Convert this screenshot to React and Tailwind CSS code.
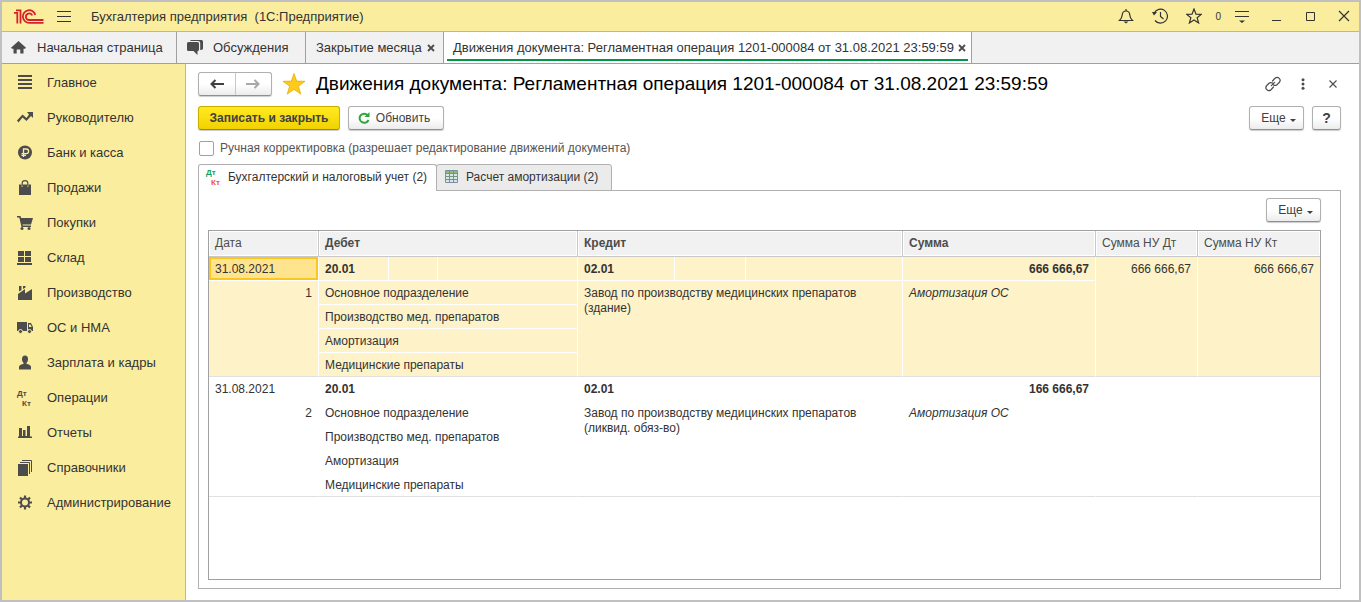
const SECTIONS = [
  { icon: 'main', label: 'Главное' },
  { icon: 'trend', label: 'Руководителю' },
  { icon: 'ruble', label: 'Банк и касса' },
  { icon: 'bag', label: 'Продажи' },
  { icon: 'cart', label: 'Покупки' },
  { icon: 'boxes', label: 'Склад' },
  { icon: 'factory', label: 'Производство' },
  { icon: 'truck', label: 'ОС и НМА' },
  { icon: 'person', label: 'Зарплата и кадры' },
  { icon: 'dtkt', label: 'Операции' },
  { icon: 'chart', label: 'Отчеты' },
  { icon: 'books', label: 'Справочники' },
  { icon: 'gear', label: 'Администрирование' },
]

const ENTRIES = [
  {
    date: '31.08.2021',
    number: 1,
    debit: '20.01',
    credit: '02.01',
    amount: '666 666,67',
    taxDebit: '666 666,67',
    taxCredit: '666 666,67',
    debitLines: ['Основное подразделение', 'Производство мед. препаратов', 'Амортизация', 'Медицинские препараты'],
    creditLine: 'Завод по производству медицинских препаратов (здание)',
    comment: 'Амортизация ОС',
    selected: true,
  },
  {
    date: '31.08.2021',
    number: 2,
    debit: '20.01',
    credit: '02.01',
    amount: '166 666,67',
    taxDebit: '',
    taxCredit: '',
    debitLines: ['Основное подразделение', 'Производство мед. препаратов', 'Амортизация', 'Медицинские препараты'],
    creditLine: 'Завод по производству медицинских препаратов (ликвид. обяз-во)',
    comment: 'Амортизация ОС',
    selected: false,
  },
]

const SECTION_ICONS = {
  main: <path d="M1 0h14v2H1zM1 4h14v2H1zM1 8h14v2H1zM1 12h14v2H1z" />,
  trend: <path d="M10 2h6v6l-2-2-4.500 5-4-3.500L1.500 12.500 0 10.500 5.500 4.500l4 3.500L12 4.500z" />,
  ruble: (
    <>
      <circle cx="8" cy="7.500" r="7" />
      <path d="M6.500 12V4h2.800a2.200 2.200 0 0 1 0 4.600H4.500M4.500 10.300h4.500" fill="none" stroke="#fbed9e" strokeWidth="1.300" />
    </>
  ),
  bag: (
    <>
      <path d="M2 4.500h2.500v2h1.500v-2h4v2h1.500v-2H14V15H2z" />
      <path d="M5.200 6V3Q5.200.600 8 .600T10.800 3v3" fill="none" stroke="#4c4c4c" strokeWidth="1.200" />
    </>
  ),
  cart: (
    <>
      <path d="M0 1h3.500l.6 2H16l-2 6.500H5.500l.3 1H14V12H4.500L2.300 2.500H0z" />
      <circle cx="5" cy="13.600" r="1.500" />
      <circle cx="12" cy="13.600" r="1.500" />
    </>
  ),
  boxes: <path d="M1 1h6v5H1zM8 1h6v5H8zM1 7h6v5H1zM8 7h6v5H8zM0 13h15v2H0z" />,
  factory: <path d="M1 15V9l7-5v4.500L15 4v11zM2 1h2.500v4L2 6.500zM6 1h2.500v1.500L6 4z" />,
  truck: (
    <>
      <path d="M0 2h10v9H0zM11 3h3l2 4v4h-5z" />
      <path d="M12 4.500h1.500L14.700 7H12z" fill="#fbed9e" />
      <circle cx="3.500" cy="11.500" r="2" stroke="#fbed9e" />
      <circle cx="12.500" cy="11.500" r="2" stroke="#fbed9e" />
    </>
  ),
  person: (
    <>
      <ellipse cx="8" cy="4.200" rx="3" ry="3.700" />
      <path d="M6.500 7h3v3h-3zM2 14.500V12q0-2 4-3h4q4 1 4 3v2.500z" />
    </>
  ),
  chart: <path d="M2 3h3v8h1V5h2.500v6H10V1h3v10.500h2v1.500H1v-1.500h1z" />,
  books: (
    <>
      <path d="M1 4h10v12H1z" />
      <path d="M3 2.500h9.500V14M5 .5h9.500V12" fill="none" stroke="#4c4c4c" />
    </>
  ),
  gear: (
    <>
      <circle cx="8" cy="7.500" r="4" fill="none" stroke="#4c4c4c" strokeWidth="2" />
      <path d="M8 .5v3M8 11.500v3M1 7.500h3M12 7.500h3M3 2.500l2.200 2.200M10.800 10.300 13 12.500M13 2.500l-2.200 2.200M5.200 10.300 3 12.500" stroke="#4c4c4c" strokeWidth="2.200" />
    </>
  ),
}

const PLAIN_BUTTON = 'flex h-6 items-center justify-center rounded-[3px] border border-[#b0b0b0] border-b-[#8f8f8f] bg-linear-to-b from-white from-50% to-[#ececec] text-[#404040] shadow-[0_1px_1px_rgba(0,0,0,0.2)]'

function DtKt({ top, bottom }) {
  return (
    <svg className="h-4 w-4 shrink-0 overflow-visible" viewBox="0 0 16 16" fontFamily="Liberation Sans, Arial, sans-serif" fontSize="8" fontWeight="700" aria-hidden="true">
      <text x="0" y="6" fill={top}>Дт</text>
      <text x="5" y="16" fill={bottom}>Кт</text>
    </svg>
  )
}

function SectionIcon({ name }) {
  if (name === 'dtkt') return <DtKt top="#4c4c4c" bottom="#4c4c4c" />
  return <svg className="h-4 w-4 shrink-0" viewBox="0 0 16 16" fill="#4c4c4c" aria-hidden="true">{SECTION_ICONS[name]}</svg>
}

function Logo() {
  return (
    <svg className="h-4 w-[30px]" viewBox="0 0 30 16" fill="none" stroke="#d8222a" strokeWidth="1.800" aria-label="1С">
      <path d="M0 3.800h3.300V14.500M2 1.300h4.500V14.500" />
      <path d="M21.300 6A6.300 6.300 0 1 0 15.500 13.800H29.500" />
      <path d="M18.300 6.500A3.300 3.300 0 1 0 15.500 11H29.500" />
    </svg>
  )
}

function CloseMark() {
  return (
    <svg className="h-2 w-2" viewBox="0 0 8 8" stroke="#4c4c4c" strokeWidth="1.800" aria-hidden="true">
      <path d="M1 1l6 6M7 1L1 7" />
    </svg>
  )
}

function TitleBar() {
  return (
    <header className="flex h-[30px] items-center border-b border-[#c9b96a] bg-[#fbed9e] pl-3 text-[13px] text-[#333]">
      <Logo />
      <button aria-label="Меню" className="ml-[13px]">
        <svg className="h-3 w-[14px]" viewBox="0 0 14 12" stroke="#333" aria-hidden="true">
          <path d="M0 .5h14M0 5.500h14M0 10.500h14" />
        </svg>
      </button>
      <span className="ml-5 whitespace-pre">Бухгалтерия предприятия  (1С:Предприятие)</span>
      <div className="ml-auto flex items-center pr-[9px] pb-px">
        <button aria-label="Уведомления">
          <svg className="h-4 w-4" viewBox="0 0 16 16" fill="none" stroke="#333" strokeWidth="1.200" aria-hidden="true">
            <path d="M8 1v1.500M1.500 12.500h13Q12 10 11.800 7 11.500 3 8 3T4.200 7Q4 10 1.500 12.500z" />
            <path d="M5.500 13.500h5L8 15.500z" fill="#333" stroke="none" />
          </svg>
        </button>
        <button aria-label="История" className="ml-[18px]">
          <svg className="h-4 w-4" viewBox="0 0 16 16" fill="none" stroke="#333" strokeWidth="1.200" aria-hidden="true">
            <path d="M2.200 5A7 7 0 1 1 3 12.500M8.500 4v4.500l3 2.500" />
            <path d="M0 4h5L2 7.500z" fill="#333" stroke="none" />
          </svg>
        </button>
        <button aria-label="Избранное" className="ml-[18px]">
          <svg className="h-4 w-4" viewBox="0 0 16 16" fill="none" stroke="#333" strokeWidth="1.200" aria-hidden="true">
            <path d="M8 1l2 5.200 5.300.2-4.200 3.300 1.500 5.200L8 11.900l-4.600 3 1.500-5.200L.7 6.400 6 6.200z" />
          </svg>
        </button>
        <span className="ml-[13px] text-[10px]">0</span>
        <button aria-label="Настройка" className="ml-[13px]">
          <svg className="h-[14px] w-4" viewBox="0 0 16 14" stroke="#333" aria-hidden="true">
            <path d="M1 2.500h14M1 7.500h14" />
            <path d="M5 11.500h6L8 14z" fill="#333" stroke="none" />
          </svg>
        </button>
        <button aria-label="Свернуть" className="ml-[21px]">
          <svg className="h-3 w-3" viewBox="0 0 12 12" stroke="#333" aria-hidden="true"><path d="M1 10.500h9" /></svg>
        </button>
        <button aria-label="Развернуть" className="ml-[22px]">
          <svg className="h-3 w-3" viewBox="0 0 12 12" fill="none" stroke="#333" aria-hidden="true"><path d="M1.500 2.500h8v8h-8z" /></svg>
        </button>
        <button aria-label="Закрыть" className="ml-[21px]">
          <svg className="h-3 w-3" viewBox="0 0 12 12" stroke="#333" strokeWidth="1.200" aria-hidden="true"><path d="M1 1l10 10M11 1L1 11" /></svg>
        </button>
      </div>
    </header>
  )
}

function WindowTabs() {
  return (
    <nav className="flex h-8 border-b border-[#a0a0a0] bg-[#f1f1f1] text-[13px] text-[#333]">
      <button className="flex w-[175px] items-center border-r border-[#a0a0a0] pl-[9px]">
        <svg className="mr-2.5 h-4 w-4" viewBox="0 0 16 16" fill="#4c4c4c" aria-hidden="true">
          <path d="M7.500 1 15 7.800l-1 1h-1.500V13.500H9.300V9.500H5.700v4H2.500V8.800H1l-1-1z" />
        </svg>
        Начальная страница
      </button>
      <button className="flex w-[129px] items-center border-r border-[#a0a0a0] pl-2.5">
        <svg className="mr-2.5 h-4 w-4" viewBox="0 0 16 16" fill="#4c4c4c" aria-hidden="true">
          <path d="M1.500 2h9Q12 2 12 3.500v6q0 1.500-1.500 1.500v4L6.500 11h-5Q0 11 0 9.500v-6Q0 2 1.500 2z" />
          <path d="M3 1q.200-1 1.500-1h10Q16 0 16 1.500v7q0 1.500-2.800 1.500V3q0-2-2-2z" />
        </svg>
        Обсуждения
      </button>
      <div className="flex w-[138px] items-center border-r border-[#a0a0a0] pl-2.5">
        <button>Закрытие месяца</button>
        <button aria-label="Закрыть вкладку" className="mr-2 ml-auto"><CloseMark /></button>
      </div>
      <div className="flex w-[528px] flex-col border-r border-[#a0a0a0] bg-white px-[3px]">
        <div className="flex grow items-center gap-1 border-b-2 border-[#009646] pt-1 pl-1.5 whitespace-nowrap">
          <button>Движения документа: Регламентная операция 1201-000084 от 31.08.2021 23:59:59</button>
          <button aria-label="Закрыть вкладку"><CloseMark /></button>
        </div>
        <div className="h-0.5" />
      </div>
    </nav>
  )
}

function Sidebar() {
  return (
    <nav className="w-[184px] shrink-0 border-r border-[#c9b96a] bg-[#fbed9e] pt-px text-[13px] text-[#333]">
      {SECTIONS.map(s => (
        <a key={s.icon} href="#" className="flex h-[35px] items-center gap-3.5 pl-[15px]">
          <SectionIcon name={s.icon} />
          {s.label}
        </a>
      ))}
    </nav>
  )
}

function MoreButton() {
  return (
    <button className={`${PLAIN_BUTTON} w-[55px] gap-1 pl-1 text-xs`}>
      Еще
      <svg className="mt-1 h-[3px] w-[6px]" viewBox="0 0 6 3" fill="#404040" aria-hidden="true"><path d="M0 0h6L3 3z" /></svg>
    </button>
  )
}

function DocumentHeader() {
  return (
    <div className="flex h-6 items-center">
      <div className={`${PLAIN_BUTTON} w-[74px]`}>
        <button aria-label="Назад" className="flex h-full flex-1 items-center justify-center border-r border-[#c8c8c8]">
          <svg className="h-3 w-[14px]" viewBox="0 0 14 12" fill="none" stroke="#404040" strokeWidth="2" aria-hidden="true"><path d="M14 6H2M5.500 2 1.500 6l4 4" /></svg>
        </button>
        <button aria-label="Вперед" className="flex h-full flex-1 items-center justify-center">
          <svg className="h-3 w-[14px]" viewBox="0 0 14 12" fill="none" stroke="#a8a8a8" strokeWidth="2" aria-hidden="true"><path d="M0 6h12M8.500 2l4 4-4 4" /></svg>
        </button>
      </div>
      <button aria-label="В избранное" className="ml-2.5">
        <svg className="h-6 w-6" viewBox="0 0 24 24" fill="#fdcb1c" stroke="#e0a800" strokeWidth=".7" aria-hidden="true">
          <path d="M12 1.500l2.700 7.600 8.300.2-6.600 4.900 2.400 7.900L12 17.400l-6.800 4.700 2.400-7.900L1 9.300l8.300-.2z" />
        </svg>
      </button>
      <h1 className="ml-2.5 text-[19px] whitespace-nowrap text-black">Движения документа: Регламентная операция 1201-000084 от 31.08.2021 23:59:59</h1>
      <div className="ml-auto flex items-center pr-1">
        <button aria-label="Ссылка">
          <svg className="h-4 w-4" viewBox="0 0 16 16" fill="none" stroke="#4c4c4c" strokeWidth="1.200" strokeLinecap="round" aria-hidden="true">
            <path d="M7.500 5 10 2.300q2.200-2 4.200 0t0 4.200L12 8.700Q10.300 10 8.500 9M8.500 11 6 13.700q-2.200 2-4.200 0t0-4.200L4 7.300Q5.500 6 7.500 7M6.300 9.700l3.400-3.400" />
          </svg>
        </button>
        <button aria-label="Дополнительно" className="ml-4">
          <svg className="h-3 w-3" viewBox="0 0 12 12" fill="#4c4c4c" aria-hidden="true">
            <circle cx="6" cy="1.700" r="1.500" />
            <circle cx="6" cy="6" r="1.500" />
            <circle cx="6" cy="10.300" r="1.500" />
          </svg>
        </button>
        <button aria-label="Закрыть" className="ml-5">
          <svg className="h-2 w-2" viewBox="0 0 8 8" stroke="#4c4c4c" strokeWidth="1.100" aria-hidden="true"><path d="M.5.500l7 7M7.500.500l-7 7" /></svg>
        </button>
      </div>
    </div>
  )
}

function EntryRows({ entry }) {
  const line = entry.selected ? 'border-white' : 'border-transparent'
  const cell = `border-r border-b px-1.5 align-top ${line}`
  const bottom = 'border-b-[#e0e0e0]'

  return (
    <tbody className={entry.selected ? 'bg-[#fdf2c8]' : 'bg-white'}>
      <tr className="h-6">
        <td className={entry.selected ? 'border-r border-b border-white bg-[#ffe48f] px-1.5 pt-[5px] align-top shadow-[inset_0_0_0_2px_#fcc61c]' : `${cell} pt-[5px]`}>{entry.date}</td>
        <td className={`${cell} pt-[5px] font-bold`}>{entry.debit}</td>
        <td className={cell} />
        <td className={cell} />
        <td className={`${cell} pt-[5px] font-bold`}>{entry.credit}</td>
        <td className={cell} />
        <td className={cell} />
        <td className={`${cell} pt-[5px] text-right font-bold`}>{entry.amount}</td>
        <td rowSpan={5} className={`${cell} ${bottom} pt-[5px] text-right`}>{entry.taxDebit}</td>
        <td rowSpan={5} className={`border-b px-1.5 pt-[5px] text-right align-top ${bottom}`}>{entry.taxCredit}</td>
      </tr>
      {entry.debitLines.map((text, i) => (
        <tr key={text} className="h-6">
          {i === 0 && <td rowSpan={4} className={`${cell} ${bottom} pt-[5px] text-right`}>{entry.number}</td>}
          <td colSpan={3} className={`${cell} pt-[5px] ${i === 3 ? bottom : ''}`}>{text}</td>
          {i === 0 && <td rowSpan={4} colSpan={3} className={`${cell} ${bottom} pt-[5px]`}>{entry.creditLine}</td>}
          {i === 0 && <td rowSpan={4} className={`${cell} ${bottom} pt-[5px] italic`}>{entry.comment}</td>}
        </tr>
      ))}
    </tbody>
  )
}

function EntriesTable() {
  const head = 'border-r border-b border-[#c8c8c8] px-1.5 text-left shadow-[inset_0_0_0_1px_#fff]'
  return (
    <div className="grow overflow-hidden border border-[#a0a0a0] bg-white">
      <table className="w-full table-fixed border-separate border-spacing-0 text-xs leading-[15px] text-[#333]">
        <colgroup>
          <col className="w-[110px]" />
          <col className="w-[70px]" />
          <col className="w-[49px]" />
          <col className="w-[140px]" />
          <col className="w-[97px]" />
          <col className="w-[71px]" />
          <col className="w-[157px]" />
          <col className="w-[193px]" />
          <col className="w-[102px]" />
          <col />
        </colgroup>
        <thead className="bg-[#f1f1f1] text-[#4c4c4c]">
          <tr className="h-[26px]">
            <th className={`${head} font-normal`}>Дата</th>
            <th colSpan={3} className={`${head} font-bold`}>Дебет</th>
            <th colSpan={3} className={`${head} font-bold`}>Кредит</th>
            <th className={`${head} font-bold`}>Сумма</th>
            <th className={`${head} font-normal`}>Сумма НУ Дт</th>
            <th className={`${head} border-r-0 font-normal`}>Сумма НУ Кт</th>
          </tr>
        </thead>
        {ENTRIES.map(e => <EntryRows key={e.number} entry={e} />)}
      </table>
    </div>
  )
}

export default function App() {
  return (
    <div className="flex min-h-screen flex-col border-2 border-[#c0c0c0] bg-white font-['Liberation_Sans',Arial,sans-serif]">
      <TitleBar />
      <WindowTabs />
      <div className="flex grow">
        <Sidebar />
        <main className="flex min-w-0 grow flex-col pt-2 pr-[18px] pb-[11px] pl-3 text-xs text-[#333]">
          <DocumentHeader />

          <div className="mt-2.5 flex gap-2">
            <button className="h-6 w-[142px] rounded-[3px] border border-[#c9ae00] border-b-[#a08a00] bg-linear-to-b from-[#ffea1e] to-[#f2d200] font-bold text-[#404040] shadow-[0_1px_1px_rgba(0,0,0,0.2)]">Записать и закрыть</button>
            <button className={`${PLAIN_BUTTON} w-24 gap-1.5 pr-1`}>
              <svg className="h-3 w-3" viewBox="0 0 12 12" fill="none" stroke="#2ea53a" strokeWidth="2" aria-hidden="true">
                <path d="M9.500 3A4.600 4.600 0 1 0 10.500 8" />
                <path d="M11.500 0v5h-5z" fill="#2ea53a" stroke="none" />
              </svg>
              Обновить
            </button>
            <div className="ml-auto flex gap-2">
              <MoreButton />
              <button aria-label="Справка" className={`${PLAIN_BUTTON} w-[29px] text-sm font-bold`}>?</button>
            </div>
          </div>

          <label className="mt-2.5 flex h-4 items-center gap-1.5 pl-px text-[#555]">
            <input type="checkbox" className="h-[15px] w-[15px] appearance-none rounded-[2px] border border-[#a0a0a0] bg-white" />
            Ручная корректировка (разрешает редактирование движений документа)
          </label>

          <div className="relative z-10 mt-2 -mb-px flex" role="tablist">
            <button role="tab" aria-selected="true" className="flex h-[27px] w-[239px] items-center gap-1.5 rounded-t-[3px] border border-b-0 border-[#b0b0b0] bg-white pb-0.5 pl-[7px]">
              <DtKt top="#14a050" bottom="#ee5050" />
              Бухгалтерский и налоговый учет (2)
            </button>
            <button role="tab" aria-selected="false" className="-ml-px flex h-[27px] w-44 items-center gap-2 rounded-t-[3px] border border-[#b0b0b0] bg-[#ebebeb] pb-0.5 pl-2">
              <svg className="h-[13px] w-[13px]" viewBox="0 0 13 13" aria-hidden="true">
                <path d="M.5.500h12v12H.5z" fill="#dce6ea" stroke="#7890a0" />
                <path d="M1 1h11v2H1z" fill="#8cc070" />
                <path d="M1 3.500h11M1 6.500h11M1 9.500h11M4.500 1v11M8.500 1v11" stroke="#6c9884" />
              </svg>
              Расчет амортизации (2)
            </button>
          </div>

          <section className="flex grow flex-col border border-[#b0b0b0] pt-[7px] pr-[19px] pb-2 pl-[9px]">
            <div className="mb-2 flex justify-end">
              <MoreButton />
            </div>
            <EntriesTable />
          </section>
        </main>
      </div>
    </div>
  )
}
